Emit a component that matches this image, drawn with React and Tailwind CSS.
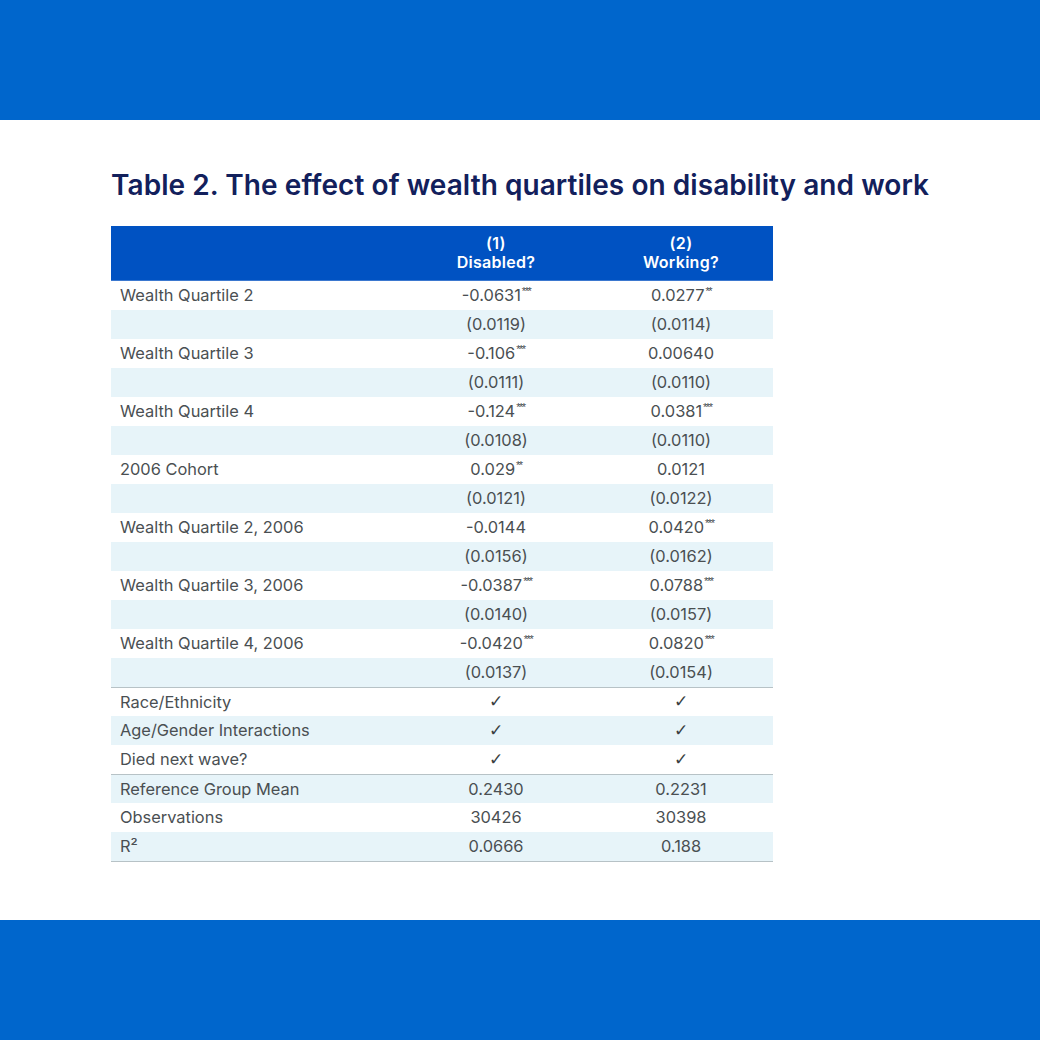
import React from "react";

const rows = [
  ["Wealth Quartile 2", "-0.0631", "***", "0.0277", "**"],
  ["", "(0.0119)", "", "(0.0114)", ""],
  ["Wealth Quartile 3", "-0.106", "***", "0.00640", ""],
  ["", "(0.0111)", "", "(0.0110)", ""],
  ["Wealth Quartile 4", "-0.124", "***", "0.0381", "***"],
  ["", "(0.0108)", "", "(0.0110)", ""],
  ["2006 Cohort", "0.029", "**", "0.0121", ""],
  ["", "(0.0121)", "", "(0.0122)", ""],
  ["Wealth Quartile 2, 2006", "-0.0144", "", "0.0420", "***"],
  ["", "(0.0156)", "", "(0.0162)", ""],
  ["Wealth Quartile 3, 2006", "-0.0387", "***", "0.0788", "***"],
  ["", "(0.0140)", "", "(0.0157)", ""],
  ["Wealth Quartile 4, 2006", "-0.0420", "***", "0.0820", "***"],
  ["", "(0.0137)", "", "(0.0154)", ""],
];

const controls = [
  ["Race/Ethnicity", "✓", "✓"],
  ["Age/Gender Interactions", "✓", "✓"],
  ["Died next wave?", "✓", "✓"],
];

const stats = [
  ["Reference Group Mean", "0.2430", "0.2231"],
  ["Observations", "30426", "30398"],
  ["R²", "0.0666", "0.188"],
];

function Cell({ value, stars, check }) {
  return (
    <div className="flex items-center justify-center">
      {check ? (
        <span className="text-[17px] font-bold text-[#3a3f42] font-['DejaVu_Sans']">{value}</span>
      ) : (
        <span className="flex items-start">
          {value}
          {stars && (
            <span className="mt-[3px] ml-[1px] text-[11px] leading-none font-['Liberation_Sans'] tracking-[-1.5px]">
              {stars}
            </span>
          )}
        </span>
      )}
    </div>
  );
}

function Row({ label, a, aStars, b, bStars, shaded, borderTop, check }) {
  return (
    <div
      className={`grid grid-cols-[292px_186px_184px] h-[29px] items-center ${
        shaded ? "bg-[#e7f4f9]" : "bg-white"
      } ${borderTop ? "border-t border-[#b7c2c6]" : ""}`}
    >
      <div className="pl-[9px]">{label}</div>
      <Cell value={a} stars={aStars} check={check} />
      <Cell value={b} stars={bStars} check={check} />
    </div>
  );
}

export default function App() {
  return (
    <div
      className="w-[1040px] h-[1040px] flex flex-col bg-white"
      style={{ fontFamily: "Inter, 'Liberation Sans', sans-serif" }}
    >
      <div className="h-[120px] bg-[#0066cc]" />
      <div className="flex-1 pl-[111px] pt-[48px]">
        <h1 className="text-[28px] font-semibold text-[#12205c] tracking-[0.06px] leading-[34px] whitespace-nowrap">
          Table 2. The effect of wealth quartiles on disability and work
        </h1>
        <div className="mt-[24px] w-[662px] text-[16.4px] text-[#4a4f52]">
          <div className="grid grid-cols-[292px_186px_184px] h-[55px] bg-[#0052c2] items-center text-white font-semibold text-[16px] leading-[19px] tracking-[0.3px] border-b border-[#3b78cf]">
            <div />
            <div className="text-center">
              (1)
              <br />
              Disabled?
            </div>
            <div className="text-center">
              (2)
              <br />
              Working?
            </div>
          </div>
          {rows.map((r, i) => (
            <Row
              key={i}
              label={r[0]}
              a={r[1]}
              aStars={r[2]}
              b={r[3]}
              bStars={r[4]}
              shaded={i % 2 === 1}
            />
          ))}
          {controls.map((r, i) => (
            <Row
              key={"c" + i}
              label={r[0]}
              a={r[1]}
              b={r[2]}
              check
              shaded={i % 2 === 1}
              borderTop={i === 0}
            />
          ))}
          {stats.map((r, i) => (
            <Row
              key={"s" + i}
              label={r[0]}
              a={r[1]}
              b={r[2]}
              shaded={i % 2 === 0}
              borderTop={i === 0}
            />
          ))}
          <div className="border-t border-[#b7c2c6]" />
        </div>
      </div>
      <div className="h-[120px] bg-[#0066cc]" />
    </div>
  );
}
